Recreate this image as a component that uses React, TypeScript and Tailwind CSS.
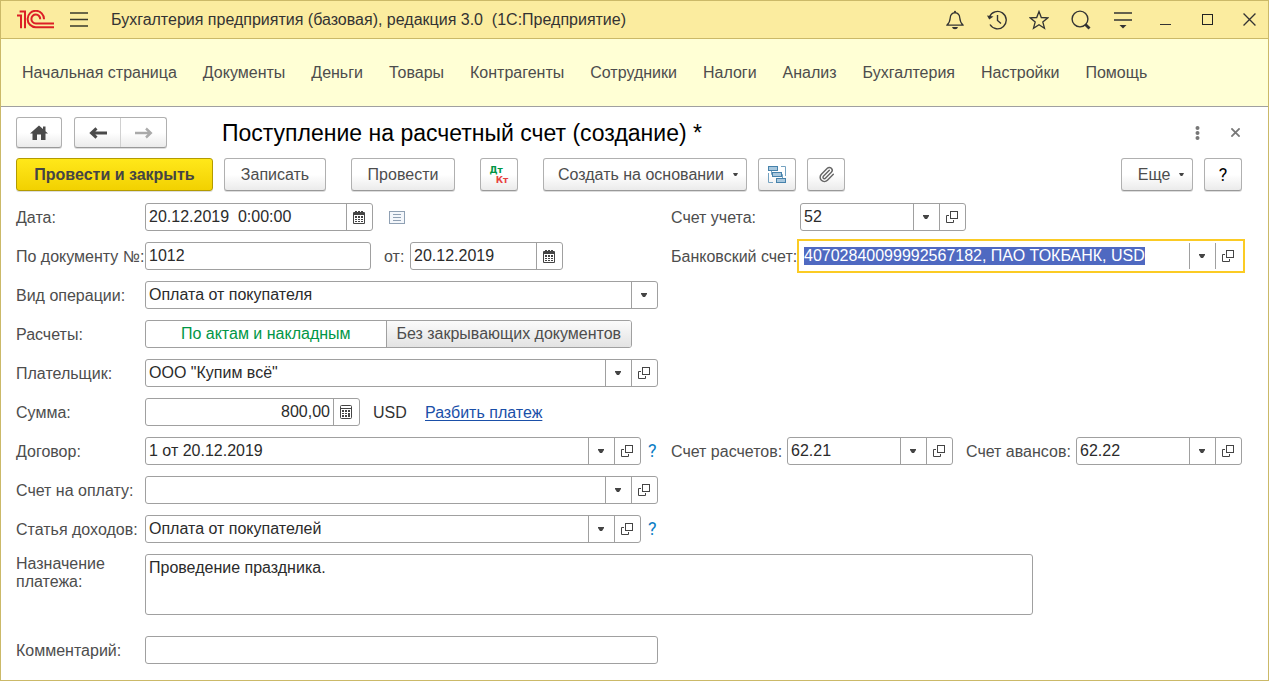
import React, { useEffect, useRef, useState } from 'react';
import clsx from 'clsx';
import { Paperclip } from 'lucide-react';

const MENU = [
    'Начальная страница', 'Документы', 'Деньги', 'Товары', 'Контрагенты', 'Сотрудники',
    'Налоги', 'Анализ', 'Бухгалтерия', 'Настройки', 'Помощь',
];

/* ---------- Icons ---------- */

function Logo() {
    return (
        <svg width="37" height="19" viewBox="0 0 37 19" fill="none" stroke="#dc1f26" strokeWidth="2" aria-hidden="true">
            <path d="M0 5.500H4V18.200M2.600 1.400H8V18.200" />
            <path d="M27 9.200A8.200 8.200 0 1 0 18.800 17.200H37" />
            <path d="M23.200 9.200A4.400 4.400 0 1 0 18.800 13.400H37" />
        </svg>
    );
}

function BurgerIcon() {
    return (
        <svg width="18" height="15" viewBox="0 0 18 15" stroke="#3a3a2c" strokeWidth="1.3" aria-hidden="true">
            <path d="M0 1H18M0 7.5H18M0 14H18" />
        </svg>
    );
}

function BellIcon() {
    return (
        <svg width="20" height="20" viewBox="0 0 20 20" fill="none" stroke="#333" strokeWidth="1.3" aria-hidden="true">
            <path d="M1.800 15.200C4.500 13 5 11.500 5.200 8C5.400 4.800 7 2.900 10 2.600C13 2.900 14.600 4.800 14.800 8C15 11.500 15.500 13 18.200 15.200Z" strokeLinejoin="round" />
            <circle cx="10" cy="1.700" r="1" fill="#333" stroke="none" />
            <path d="M7 17H13Q12.500 19.200 10 19.200Q7.500 19.200 7 17Z" fill="#333" stroke="none" />
        </svg>
    );
}

function HistoryIcon() {
    return (
        <svg width="20" height="20" viewBox="0 0 20 20" fill="none" stroke="#333" strokeWidth="1.4" aria-hidden="true">
            <path d="M2.400 7A8.700 8.700 0 1 1 3 14.500" />
            <path d="M10.500 5V10.500L14 13.500" />
            <path d="M0 5.500L6.500 6.500L2.200 9.500Z" fill="#333" stroke="none" />
        </svg>
    );
}

function StarIcon() {
    return (
        <svg width="20" height="20" viewBox="0 0 20 20" fill="none" stroke="#333" strokeWidth="1.3" aria-hidden="true">
            <path d="M10 1.500L12.300 7.500L18.800 7.800L13.800 11.900L15.500 18.200L10 14.700L4.500 18.200L6.200 11.900L1.200 7.800L7.700 7.500Z" />
        </svg>
    );
}

function SearchIcon() {
    return (
        <svg width="20" height="20" viewBox="0 0 20 20" fill="none" stroke="#333" aria-hidden="true">
            <circle cx="9" cy="9" r="7.900" strokeWidth="1.4" />
            <path d="M14.200 14.200L18.500 18.500" strokeWidth="2.800" />
        </svg>
    );
}

function PanelMenuIcon() {
    return (
        <svg width="18" height="18" viewBox="0 0 18 18" stroke="#333" strokeWidth="1.4" aria-hidden="true">
            <path d="M0 2H18M0 9H18" />
            <path d="M5.500 14H12.500L9 17.500Z" fill="#333" stroke="none" />
        </svg>
    );
}

function MinimizeIcon() {
    return (
        <svg width="11" height="12" viewBox="0 0 11 12" stroke="#333" aria-hidden="true">
            <path d="M0 10.500H11" />
        </svg>
    );
}

function MaximizeIcon() {
    return (
        <svg width="11" height="11" viewBox="0 0 11 11" fill="none" stroke="#222" aria-hidden="true">
            <rect x="0.500" y="0.500" width="10" height="10" />
        </svg>
    );
}

function CrossIcon({ size, width, color }: { size: number; width: number; color: string }) {
    return (
        <svg width={size} height={size} viewBox="0 0 12 12" stroke={color} strokeWidth={width} aria-hidden="true">
            <path d="M0.500 0.500L11.500 11.500M11.500 0.500L0.500 11.500" />
        </svg>
    );
}

function HomeIcon() {
    return (
        <svg width="18" height="16" viewBox="0 0 18 16" fill="#4a4a4a" aria-hidden="true">
            <path d="M9 0.500L13 4V1.500H15.500V6.200L18 8.500H15.500V15H11V9.500H7V15H2.500V8.500H0Z" />
        </svg>
    );
}

function ArrowIcon({ forward }: { forward?: boolean }) {
    return (
        <svg width="18" height="14" viewBox="0 0 18 14" aria-hidden="true">
            {forward ? (
                <path d="M0 7H16M11 2.500L15.800 7L11 11.500" fill="none" stroke="#aaa" strokeWidth="2.400" />
            ) : (
                <path d="M18 7H3M7.500 2.300L2.500 7L7.500 11.700" fill="none" stroke="#4a4a4a" strokeWidth="3" />
            )}
        </svg>
    );
}

function CaretIcon({ small }: { small?: boolean }) {
    return (
        <svg width={small ? 5 : 6} height={small ? 3 : 4} viewBox="0 0 6 4" fill="#444" aria-hidden="true">
            <path d="M0 0H6V1L4 4H2L0 1Z" />
        </svg>
    );
}

function OpenIcon() {
    return (
        <svg width="12" height="12" viewBox="0 0 12 12" fill="none" stroke="#444" aria-hidden="true">
            <rect x="4.500" y="0.500" width="7" height="7" />
            <path d="M3 4.500H0.500V11.500H7.500V9" />
        </svg>
    );
}

function CalendarIcon() {
    return (
        <svg width="12" height="13" viewBox="0 0 12 13" aria-hidden="true">
            <path d="M0 2Q0 1 1 1H2V0H4V1H5V0H7V1H8V0H10V1H11Q12 1 12 2V12Q12 13 11 13H1Q0 13 0 12Z" fill="#444" />
            <path d="M1 4H11V12H1Z" fill="#fff" />
            <path d="M2 5H4V7H2ZM5 5H7V7H5ZM8 5H10V7H8ZM2 8H4V9H2ZM5 8H7V9H5ZM8 8H10V9H8ZM2 10H4V11H2ZM5 10H7V11H5ZM8 10H10V11H8Z" fill="#444" />
        </svg>
    );
}

function CalculatorIcon() {
    return (
        <svg width="12" height="14" viewBox="0 0 12 14" aria-hidden="true">
            <rect x="0.500" y="0.500" width="11" height="13" rx="1" fill="#fff" stroke="#444" />
            <path d="M1 3H11V4H1ZM2 5H4V7H2ZM5 5H7V7H5ZM8 5H10V7H8ZM2 8H4V9H2ZM5 8H7V9H5ZM2 10H4V12H2ZM5 10H7V12H5ZM8 8H10V12H8Z" fill="#444" />
        </svg>
    );
}

function ListIcon() {
    return (
        <svg width="16" height="13" viewBox="0 0 16 13" fill="#f4f7fb" stroke="#8fa0b3" aria-hidden="true">
            <rect x="0.500" y="0.500" width="15" height="12" />
            <path d="M4 3.500H12M4 6.500H12M4 9.500H12" />
        </svg>
    );
}

function StructureIcon() {
    return (
        <svg width="18" height="19" viewBox="0 0 18 19" fill="#a9c8de" stroke="#4682ab" aria-hidden="true">
            <path d="M13 1.500H17.500V11M0.500 8V17.500H5M3.500 6V9.500H5M13.500 9.500H14.500V14" fill="none" stroke="#74a2c1" />
            <rect x="0.500" y="1.500" width="9" height="4" />
            <rect x="4.500" y="7.500" width="9" height="4" />
            <rect x="8.500" y="13.500" width="9" height="4" />
        </svg>
    );
}

/* ---------- Controls ---------- */

const BOX = 'flex h-7 min-w-0 rounded-[3px] border border-[#a0a0a0] bg-white';
const CELL = 'flex w-[26px] shrink-0 items-center justify-center border-l border-[#a0a0a0] pr-px';
const BUTTON =
    'flex items-center justify-center rounded-[3px] border border-[#b0b0b0] border-b-[#999] bg-linear-to-b from-white from-50% to-[#ebebeb] shadow-[0_1px_0_#ddd]';

type Kind = 'date' | 'calc' | 'drop' | 'open';

const CELLS: Record<Kind, { title: string; icon: React.ReactNode }> = {
    date: { title: 'Выбрать дату', icon: <CalendarIcon /> },
    calc: { title: 'Калькулятор', icon: <CalculatorIcon /> },
    drop: { title: 'Выбрать из списка', icon: <CaretIcon /> },
    open: { title: 'Открыть', icon: <OpenIcon /> },
};

interface FieldProps {
    id: string;
    value?: string;
    cells?: Kind[];
    className?: string;
    alignRight?: boolean;
    active?: boolean;
}

function Field({ id, value = '', cells = [], className, alignRight, active }: FieldProps) {
    const ref = useRef<HTMLInputElement>(null);

    // the active field opens with its whole value selected
    useEffect(() => {
        if (active) {
            ref.current?.focus();
            ref.current?.select();
        }
    }, [active]);

    return (
        <div className={clsx(BOX, className, active && 'rounded-none border-white outline-2 outline-offset-1 outline-[#fbcb24]')}>
            <input
                ref={ref}
                id={id}
                type="text"
                defaultValue={value}
                className={clsx(
                    'w-0 min-w-0 flex-1 bg-transparent px-[3px] text-[#2b2b2b] outline-none selection:bg-[#4f69c1] selection:text-white',
                    alignRight && 'text-right',
                )}
            />
            {cells.map((kind) => (
                <button key={kind} type="button" aria-label={CELLS[kind].title} className={CELL}>
                    {CELLS[kind].icon}
                </button>
            ))}
        </div>
    );
}

interface RowProps {
    id: string;
    label: string;
    children: React.ReactNode;
    right?: React.ReactNode;
}

function Row({ id, label, children, right }: RowProps) {
    return (
        <div className="grid grid-cols-[655fr_571fr]">
            <div className="flex items-center pr-[13px]">
                <label htmlFor={id} className="w-[129px] shrink-0 pt-px whitespace-nowrap">{label}</label>
                {children}
            </div>
            <div className="flex items-center">{right}</div>
        </div>
    );
}

function Help() {
    return (
        <button type="button" aria-label="Справка" className="w-[17px] shrink-0 pl-[7px] text-left font-[Roboto,sans-serif] text-lg leading-5 text-[#0a7cc4]">?</button>
    );
}

function Settlements() {
    const [mode, setMode] = useState('acts');
    const options = [
        { id: 'acts', text: 'По актам и накладным', size: 'flex-[240_1_0%]' },
        { id: 'none', text: 'Без закрывающих документов', size: 'flex-[245_1_0%]' },
    ];

    return (
        <div role="radiogroup" aria-label="Расчеты" className={clsx(BOX, 'mr-[26px] flex-1 overflow-hidden')}>
            {options.map((option) => (
                <label
                    key={option.id}
                    className={clsx(
                        'flex items-center justify-center whitespace-nowrap',
                        option.size,
                        mode === option.id
                            ? 'text-[#009646]'
                            : 'border-l border-[#a0a0a0] bg-linear-to-b from-[#fbfbfb] to-[#e3e3e3]',
                    )}
                >
                    <input
                        id={option.id}
                        type="radio"
                        name="settlements"
                        className="sr-only"
                        checked={mode === option.id}
                        onChange={() => setMode(option.id)}
                    />
                    {option.text}
                </label>
            ))}
        </div>
    );
}

/* ---------- Page parts ---------- */

function TitleBar() {
    const tool = 'flex w-[42px] justify-center';
    return (
        <header className="flex h-[38px] items-center border-b border-[#cbb968] bg-[#fbec9f] pl-4 text-[#333]">
            <Logo />
            <button type="button" aria-label="Главное меню" className="ml-4"><BurgerIcon /></button>
            <div className="ml-[23px] whitespace-pre">Бухгалтерия предприятия (базовая), редакция 3.0  (1С:Предприятие)</div>
            <div className="ml-auto flex items-center">
                <button type="button" aria-label="Уведомления" className={tool}><BellIcon /></button>
                <button type="button" aria-label="История" className={tool}><HistoryIcon /></button>
                <button type="button" aria-label="Избранное" className={tool}><StarIcon /></button>
                <button type="button" aria-label="Поиск" className={tool}><SearchIcon /></button>
                <button type="button" aria-label="Настройка панели" className={tool}><PanelMenuIcon /></button>
                <button type="button" aria-label="Свернуть" className={tool}><MinimizeIcon /></button>
                <button type="button" aria-label="Развернуть" className={tool}><MaximizeIcon /></button>
                <button type="button" aria-label="Закрыть" className="flex w-10 justify-center pl-0.5"><CrossIcon size={13} width={1.2} color="#333" /></button>
            </div>
        </header>
    );
}

function FormHeader() {
    return (
        <div className="flex items-center">
            <button type="button" aria-label="Домой" className={clsx(BUTTON, 'h-[31px] w-[46px]')}><HomeIcon /></button>
            <div className={clsx(BUTTON, 'ml-3 h-[31px] w-[93px] shrink-0')}>
                <button type="button" aria-label="Назад" className="flex h-full flex-1 items-center justify-center border-r border-[#d0d0d0]"><ArrowIcon /></button>
                <button type="button" aria-label="Вперед" className="flex h-full flex-1 items-center justify-center"><ArrowIcon forward /></button>
            </div>
            <h1 className="ml-[55px] text-[23px] leading-7 text-black">Поступление на расчетный счет (создание) *</h1>
            <button type="button" aria-label="Действия" className="ml-auto flex w-[38px] justify-center">
                <svg width="5" height="14" viewBox="0 0 5 14" fill="#777" aria-hidden="true">
                    <circle cx="2.500" cy="2" r="2" />
                    <circle cx="2.500" cy="7" r="2" />
                    <circle cx="2.500" cy="12" r="2" />
                </svg>
            </button>
            <button type="button" aria-label="Закрыть форму" className="flex w-[26px] justify-center pl-3">
                <CrossIcon size={9} width={2.4} color="#777" />
            </button>
        </div>
    );
}

function Toolbar() {
    return (
        <div className="mt-[10px] flex h-[33px] items-stretch whitespace-nowrap">
            <button
                type="button"
                className="w-[197px] rounded-[3px] border border-[#b39b00] bg-linear-to-b from-[#ffe819] to-[#f2d100] font-bold text-[#444] shadow-[0_1px_0_#ddd]"
            >
                Провести и закрыть
            </button>
            <button type="button" className={clsx(BUTTON, 'ml-[11px] w-[102px]')}>Записать</button>
            <button type="button" className={clsx(BUTTON, 'ml-[25px] w-[104px]')}>Провести</button>
            <button type="button" className={clsx(BUTTON, "ml-[25px] w-[38px] flex-col font-['DejaVu_Sans',sans-serif] text-[9px] leading-[10px] font-bold")}>
                <span className="pr-1.5 text-[#009646]">Дт</span>
                <span className="pl-1.5 text-[#e8413f]">Кт</span>
            </button>
            <button type="button" className={clsx(BUTTON, 'ml-[25px] w-[204px] gap-[9px] pl-1.5')}>Создать на основании <CaretIcon small /></button>
            <button type="button" aria-label="Структура подчиненности" className={clsx(BUTTON, 'ml-[11px] w-[38px]')}><StructureIcon /></button>
            <button type="button" aria-label="Присоединенные файлы" className={clsx(BUTTON, 'ml-[11px] w-[38px]')}>
                <Paperclip size={17} strokeWidth={2} color="#666" />
            </button>
            <button type="button" className={clsx(BUTTON, 'ml-auto w-[72px] gap-[9px] pl-2')}>Еще <CaretIcon small /></button>
            <button type="button" aria-label="Справка" className={clsx(BUTTON, 'ml-[11px] w-[38px] font-[Roboto,sans-serif] text-lg text-black')}>?</button>
        </div>
    );
}

export default function App() {
    return (
        <div className="flex min-h-screen flex-col border border-[#cbb968] bg-white font-['Liberation_Sans',Arial,sans-serif] text-base leading-[18px] text-[#4d4d4d]">
            <TitleBar />
            <nav className="flex h-[68px] items-center gap-[26px] border-b border-[#a0a0a0] bg-[#ffffd5] pl-[21px] whitespace-nowrap">
                {MENU.map((item) => (
                    <a key={item} href="#">{item}</a>
                ))}
            </nav>

            <main className="pt-[10px] pr-[26px] pb-4 pl-[15px]">
                <FormHeader />
                <Toolbar />

                <form className="mt-3 flex flex-col gap-[11px]">
                    <Row
                        id="date"
                        label="Дата:"
                        right={
                            <>
                                <label htmlFor="account" className="w-[129px] shrink-0 pt-px">Счет учета:</label>
                                <Field id="account" value="52" cells={['drop', 'open']} className="w-[166px]" />
                            </>
                        }
                    >
                        <Field id="date" value="20.12.2019  0:00:00" cells={['date']} className="w-[228px]" />
                        <button type="button" aria-label="Показать список" className="ml-4"><ListIcon /></button>
                    </Row>

                    <Row
                        id="number"
                        label="По документу №:"
                        right={
                            <>
                                <label htmlFor="bank" className="w-[129px] shrink-0 pt-px whitespace-nowrap">Банковский счет:</label>
                                <Field id="bank" value="40702840099992567182, ПАО ТОКБАНК, USD" cells={['drop', 'open']} className="flex-1" active />
                            </>
                        }
                    >
                        <Field id="number" value="1012" className="w-[226px]" />
                        <label htmlFor="number-date" className="ml-[13px] w-[26px] pt-px">от:</label>
                        <Field id="number-date" value="20.12.2019" cells={['date']} className="w-[153px]" />
                    </Row>

                    <Row id="operation" label="Вид операции:">
                        <div className={clsx(BOX, 'relative flex-1')}>
                            <select id="operation" className="min-w-0 flex-1 appearance-none bg-transparent px-[3px] text-[#2b2b2b] outline-none">
                                <option>Оплата от покупателя</option>
                            </select>
                            <span className={clsx(CELL, 'pointer-events-none absolute inset-y-0 right-0')}><CaretIcon /></span>
                        </div>
                    </Row>

                    <Row id="acts" label="Расчеты:">
                        <Settlements />
                    </Row>

                    <Row id="payer" label="Плательщик:">
                        <Field id="payer" value={'ООО "Купим всё"'} cells={['drop', 'open']} className="flex-1" />
                    </Row>

                    <Row id="sum" label="Сумма:">
                        <Field id="sum" value="800,00" cells={['calc']} className="w-[215px]" alignRight />
                        <span className="ml-[13px] w-[52px] pt-px text-[#333]">USD</span>
                        <a href="#" className="pt-px text-[#1a4fa8] underline underline-offset-2">Разбить платеж</a>
                    </Row>

                    <Row
                        id="contract"
                        label="Договор:"
                        right={
                            <div className="flex flex-1 items-center whitespace-nowrap">
                                <label htmlFor="settlement-account" className="w-[116px] shrink-0 pt-px">Счет расчетов:</label>
                                <Field id="settlement-account" value="62.21" cells={['drop', 'open']} className="flex-1" />
                                <label htmlFor="advance-account" className="ml-[13px] w-[110px] shrink-0 pt-px">Счет авансов:</label>
                                <Field id="advance-account" value="62.22" cells={['drop', 'open']} className="flex-1" />
                            </div>
                        }
                    >
                        <Field id="contract" value="1 от 20.12.2019" cells={['drop', 'open']} className="flex-1" />
                        <Help />
                    </Row>

                    <Row id="invoice" label="Счет на оплату:">
                        <Field id="invoice" cells={['drop', 'open']} className="flex-1" />
                    </Row>

                    <Row id="income" label="Статья доходов:">
                        <Field id="income" value="Оплата от покупателей" cells={['drop', 'open']} className="flex-1" />
                        <Help />
                    </Row>

                    <div className="flex items-start pr-[209px]">
                        <label htmlFor="purpose" className="w-[129px] shrink-0 pt-px pr-6">Назначение платежа:</label>
                        <textarea
                            id="purpose"
                            rows={3}
                            defaultValue="Проведение праздника."
                            className="h-[61px] flex-1 resize-none rounded-[3px] border border-[#a0a0a0] px-[3px] py-1 text-[#2b2b2b] outline-none"
                        />
                    </div>

                    <div className="mt-[10px]">
                        <Row id="comment" label="Комментарий:">
                            <Field id="comment" className="flex-1" />
                        </Row>
                    </div>
                </form>
            </main>
        </div>
    );
}
